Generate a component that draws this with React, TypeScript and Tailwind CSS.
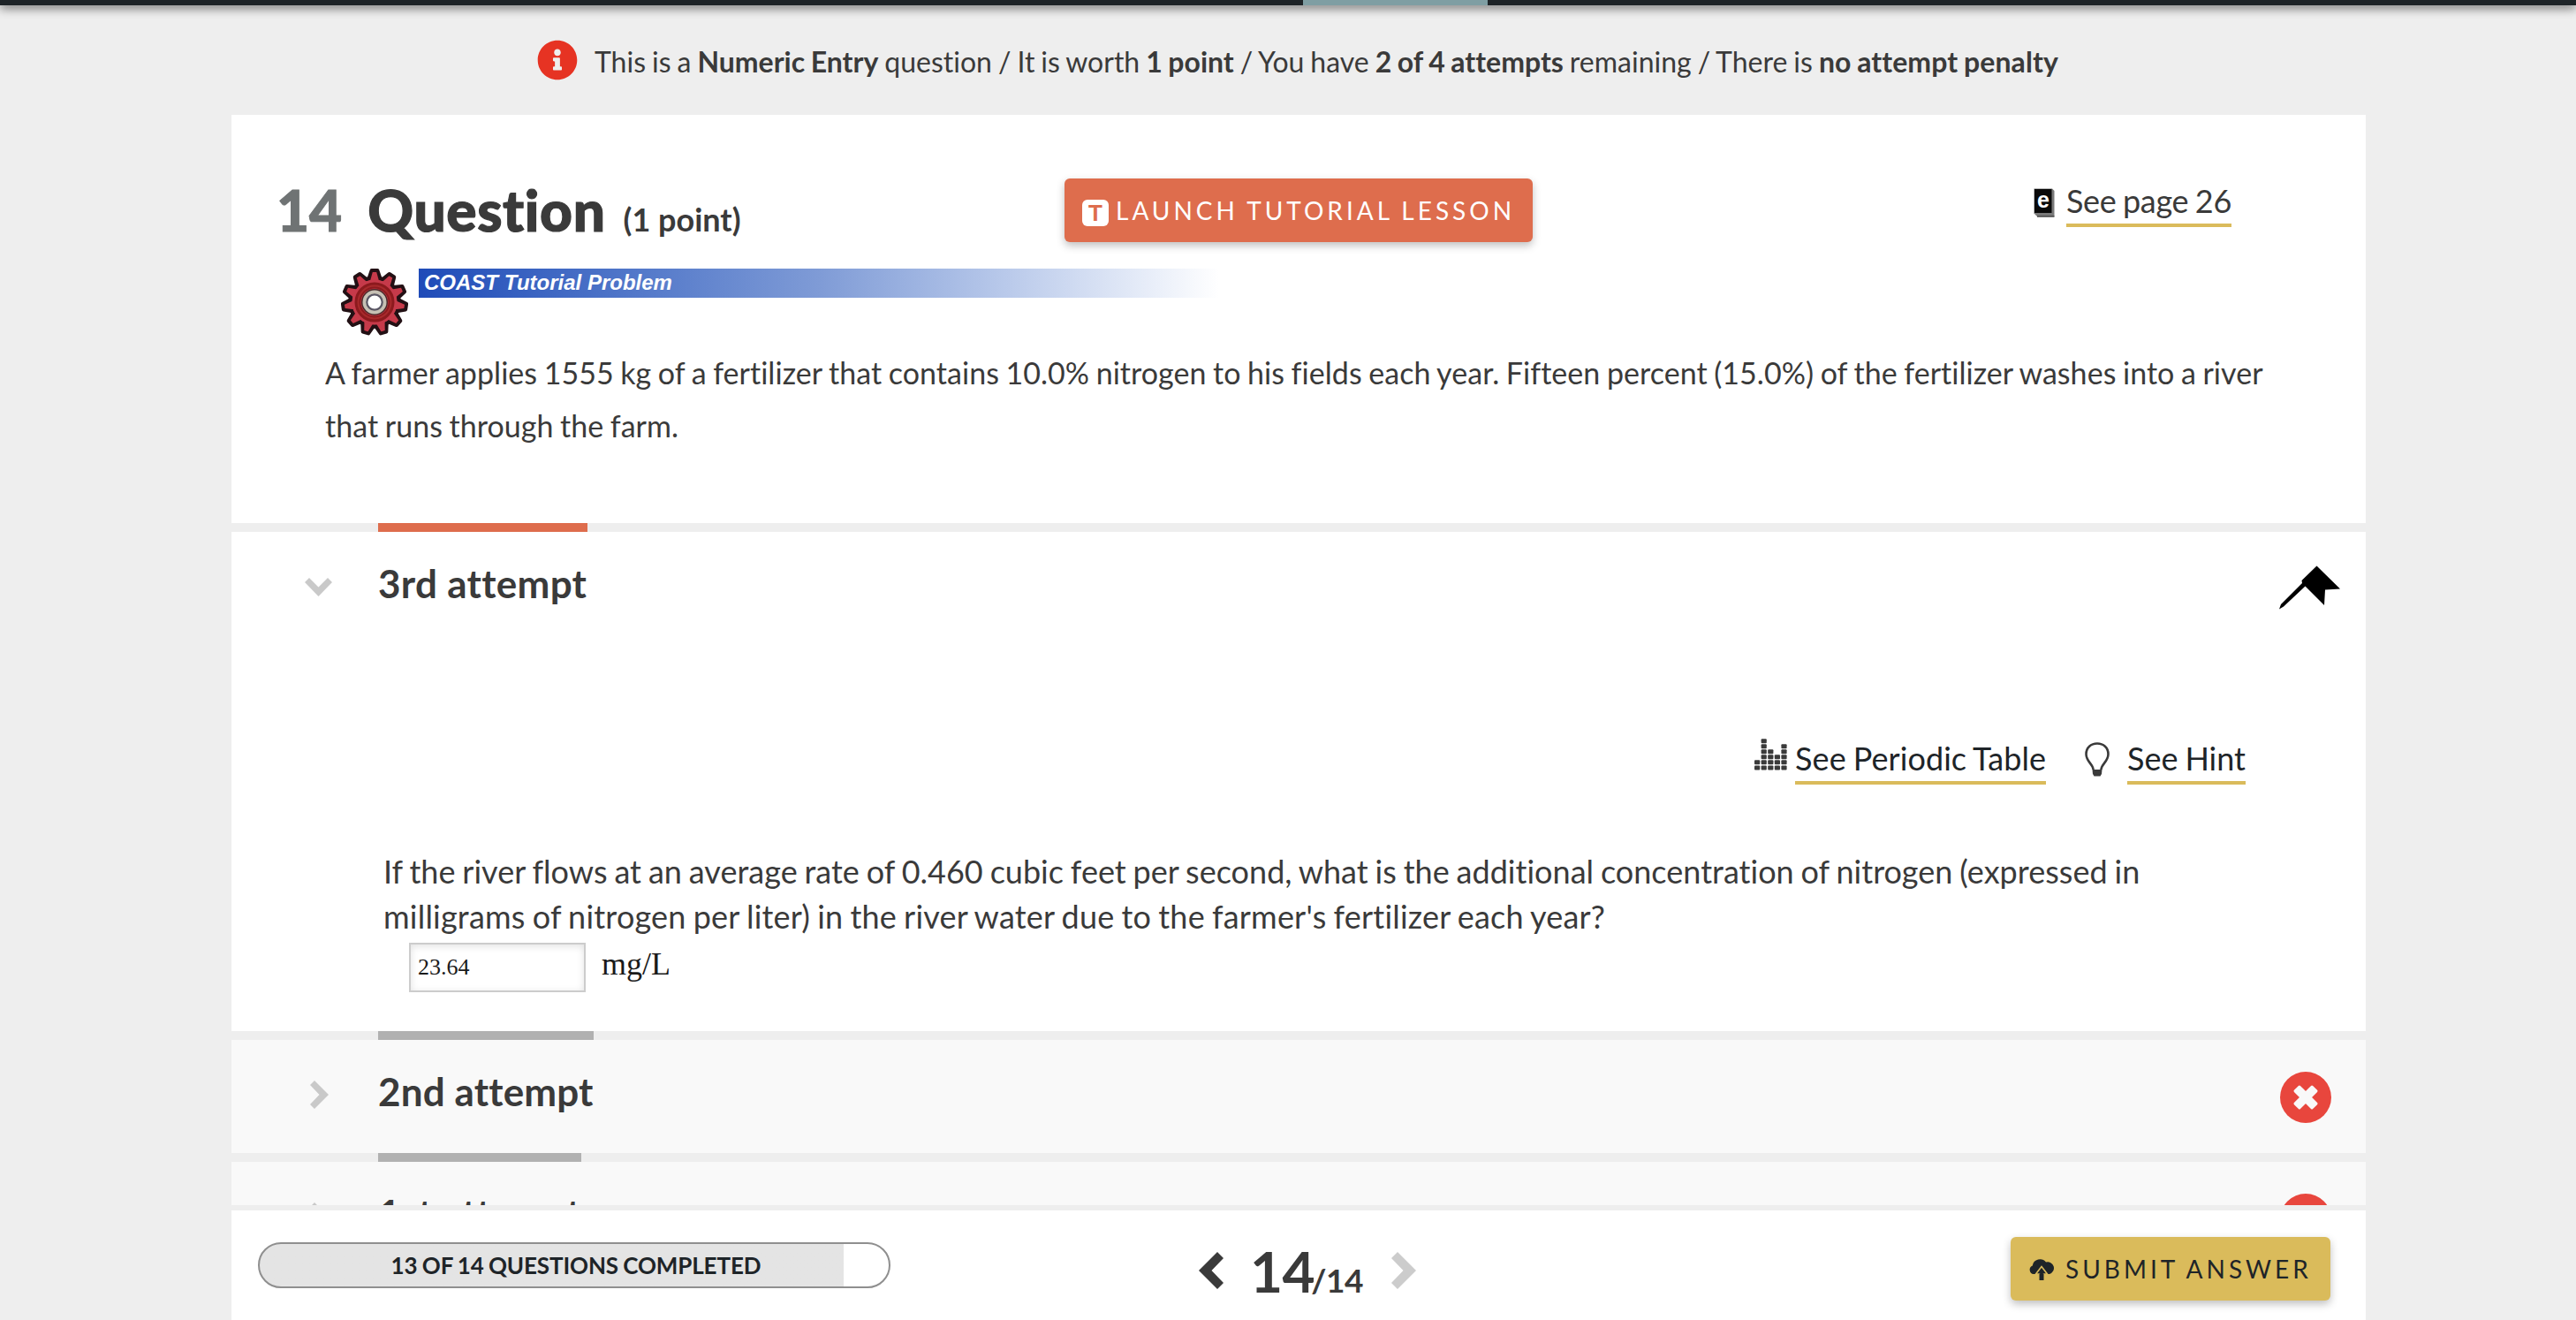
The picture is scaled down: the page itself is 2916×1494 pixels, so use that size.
import type { ReactNode } from 'react';
import { FaInfoCircle } from 'react-icons/fa';

const attempts = [
  { label: '2nd attempt', tab: 'w-[244px]' },
  { label: '1st attempt', tab: 'w-[230px]' },
];

// Column heights of the dotted bar chart icon, in dots
const periodicColumns = [2, 6, 4, 3, 5];

// 11-tooth gear, teeth placed around the centre
const gearTeeth = Array.from({ length: 11 }, (_, i) => (i * 360) / 11);

function GearIcon() {
  return (
    <svg viewBox="-38 -38 76 76" className="block w-[76px] h-[76px] shrink-0">
      <g fill="#c63a4a" stroke="#221014" strokeWidth="4.4" strokeLinejoin="round">
        {gearTeeth.map((angle) => (
          <path key={angle} d="M-6.5 -26 L-3.2 -35.8 H3.2 L6.5 -26 Z" transform={`rotate(${angle})`} />
        ))}
        <circle r="27.5" />
      </g>
      <g fill="#c63a4a">
        {gearTeeth.map((angle) => (
          <path key={angle} d="M-5 -24 L-2.2 -34 H2.2 L5 -24 Z" transform={`rotate(${angle})`} />
        ))}
        <circle r="25.5" />
      </g>
      <circle r="19" fill="none" stroke="#8c1a1e" strokeWidth="7" />
      <circle r="18.5" fill="none" stroke="#a82a2c" strokeWidth="2" />
      <circle r="15" fill="#4a2a2a" />
      <circle r="13.5" fill="#c6c0b4" />
      <circle r="9.8" fill="#5a5664" />
      <circle r="7.6" fill="#fff" />
    </svg>
  );
}

function BookIcon() {
  return (
    <svg viewBox="0 0 24 33" className="block w-[24px] h-[33px]">
      <path d="M0.5 0.5 H21 L23.5 3 V32 H4 L0.5 28.5 Z" fill="#7a7a7a" />
      <path d="M4 32 H23.5" stroke="#444" strokeWidth="1.5" />
      <path d="M1 1 H20.5 V28 H1 Z" fill="#0a0a0a" />
      <text x="10.8" y="22" textAnchor="middle" fill="#fff" className="font-['Liberation_Sans',sans-serif] font-bold text-[25px]">
        e
      </text>
    </svg>
  );
}

function PinIcon() {
  return (
    <svg viewBox="0 0 69 50" className="block w-[69px] h-[50px]">
      <path d="M42.5 0.5 L69 26.5 L52 27.5 L51 45 L29.5 23.5 L5 46.5 L0 49.5 L2 44 L26 20 L25.5 17 Z" fill="#000" />
    </svg>
  );
}

function PeriodicIcon() {
  return (
    <svg viewBox="0 0 37 36" className="block w-[37px] h-[36px]" fill="#3a3a3a">
      {periodicColumns.map((count, col) =>
        Array.from({ length: count }, (_, row) => (
          <rect key={`${col}-${row}`} x={col * 7.6} y={30.4 - row * 6.05} width="6.2" height="5" rx="1" />
        ))
      )}
    </svg>
  );
}

function BulbIcon() {
  return (
    <svg viewBox="0 0 28 39" className="block w-[28px] h-[39px]">
      <path d="M9.5 31 C9.5 25 1.5 22 1.5 13.5 C1.5 6 7 1.5 14 1.5 C21 1.5 26.5 6 26.5 13.5 C26.5 22 18.5 25 18.5 31" fill="none" stroke="#3a3a3a" strokeWidth="2.6" />
      <path d="M8.5 31 H19.5 L19 36 L17.5 38.5 H10.5 L9 36 Z" fill="#3a3a3a" />
    </svg>
  );
}

function CloudUploadIcon() {
  return (
    <svg viewBox="0 0 29 27" className="block w-[29px] h-[27px]">
      <path d="M5 19 A5 5 0 0 1 3.8 9.4 A8.6 8.6 0 0 1 19 5.6 A6.9 6.9 0 1 1 23 19 Z" fill="#1e2428" />
      <path d="M14 10.5 L20.5 19 H16.5 V26.5 H11.5 V19 H7.5 Z" fill="#1e2428" stroke="#dabb5b" strokeWidth="1.6" />
      <path d="M11.5 18.5 V26 H16.5 V18.5 Z" fill="#1e2428" />
    </svg>
  );
}

function WrongIcon() {
  return (
    <svg viewBox="-29 -29 58 58" className="block w-[58px] h-[58px]">
      <circle r="29" fill="#e8463d" />
      <g fill="#f9f9f9">
        <rect x="-15" y="-5" width="30" height="10" rx="1.5" transform="rotate(45)" />
        <rect x="-15" y="-5" width="30" height="10" rx="1.5" transform="rotate(-45)" />
      </g>
    </svg>
  );
}

function ToolLink({ children }: { children: ReactNode }) {
  return (
    <a className="block text-[36px] leading-[44px] [word-spacing:-0.038em] pb-1 border-b-4 border-[#dabb5b] whitespace-nowrap">
      {children}
    </a>
  );
}

function ClosedAttempt({ label, tab }: { label: string; tab: string }) {
  return (
    <section className="shrink-0">
      <div className="h-[10px] pl-[166px]">
        <div className={`h-full bg-[#b1b1b1] ${tab}`} />
      </div>
      <div className="h-[128px] bg-[#f9f9f9] flex items-start pl-[89px] pr-[39px]">
        <svg viewBox="0 0 21 32" className="block w-[21px] h-[32px] mt-[46px]">
          <path d="M0 5 L5 0 L21 16 L5 32 L0 27 L10.5 16 Z" fill="#c9c9c9" />
        </svg>
        <h3 className="ml-[56px] text-[44px] leading-[116px] font-bold tracking-[0.15px]">{label}</h3>
        <div className="ml-auto mt-[36px]">
          <WrongIcon />
        </div>
      </div>
    </section>
  );
}

export default function App() {
  return (
    <div className="w-[2916px] h-[1494px] overflow-hidden bg-[#eeeeee] text-[#3a3a3a] font-['Lato',sans-serif] [font-variant-ligatures:no-common-ligatures] flex flex-col">
      {/* Bottom edge of the top navigation */}
      <div className="h-[6px] shrink-0 bg-[#1e2428] pl-[1475px] shadow-[0_2px_12px_rgba(0,0,0,0.8)]">
        <div className="w-[209px] h-full bg-[#7f9ea3]" />
      </div>

      {/* Question info */}
      <div className="h-[124px] shrink-0 flex items-center pl-[608px]">
        <FaInfoCircle className="w-[46px] h-[46px] text-[#e63323]" />
        <p className="ml-[19px] mt-[3px] text-[32px] leading-[40px] [word-spacing:-0.038em] whitespace-nowrap">
          This is a <b>Numeric Entry</b> question / It is worth <b>1 point</b> / You have <b>2 of 4 attempts</b> remaining / There is <b className="tracking-[0.1px]">no attempt penalty</b>
        </p>
      </div>

      <main className="w-[2416px] ml-[262px] flex-1 min-h-0 flex flex-col">
        <div className="flex-1 min-h-0 overflow-hidden flex flex-col">
          {/* Question statement */}
          <section className="h-[462px] shrink-0 bg-white pt-[72px]">
            <div className="grid grid-cols-[1fr_auto_1fr] h-[72px]">
              <h1 className="flex items-baseline pl-[51px] text-[64px] leading-[72px] font-black whitespace-nowrap">
                <span className="text-[#6f7374] [-webkit-text-stroke:1px_#6f7374]">14</span>
                <span className="ml-[29px] tracking-[0.6px] [-webkit-text-stroke:1.2px_#3a3a3a]">Question</span>
                <span className="ml-[20px] text-[36px] font-bold">(1 point)</span>
              </h1>
              <button className="w-[530px] h-[72px] rounded-md bg-[#de6d4d] shadow-[0_4px_10px_rgba(0,0,0,0.25)] text-white flex items-center pl-[20px]">
                <svg viewBox="0 0 30 30" className="block w-[30px] h-[30px] mt-[6px]">
                  <rect width="30" height="30" rx="6" fill="#fff" />
                  <text x="15" y="24" textAnchor="middle" fill="#de6d4d" className="font-['Liberation_Sans',sans-serif] font-bold text-[26px]">
                    T
                  </text>
                </svg>
                <span className="ml-[8px] text-[28px] tracking-[4px] [word-spacing:-0.038em] whitespace-nowrap">LAUNCH TUTORIAL LESSON</span>
              </button>
              <div className="flex items-start justify-end pr-[152px] pt-[3px] tracking-[-0.3px]">
                <div className="mt-[8px] mr-[13px]">
                  <BookIcon />
                </div>
                <ToolLink>See page 26</ToolLink>
              </div>
            </div>

            <div className="flex items-start pl-[124px] mt-[30px] h-[76px]">
              <GearIcon />
              <div className="ml-[12px] w-[906px] h-[33px] pl-[6px] bg-linear-to-r from-[#1f4bb8] via-[#7f9bd6] to-white font-['Liberation_Sans',sans-serif] italic font-bold text-[24px] leading-[32px] text-white">
                COAST Tutorial Problem
              </div>
            </div>

            <p className="mt-[12px] pl-[106px] text-[34px] leading-[60px] tracking-[0.04px] [word-spacing:-0.035em] whitespace-nowrap">
              A farmer applies 1555 kg of a fertilizer that contains 10.0% nitrogen to his fields each year. Fifteen percent (15.0%) of the fertilizer washes into a river
              <br />
              that runs through the farm.
            </p>
          </section>

          {/* Open attempt */}
          <section className="shrink-0">
            <div className="h-[10px] pl-[166px]">
              <div className="w-[237px] h-full bg-[#de6d4d]" />
            </div>
            <div className="h-[565px] bg-white">
              <div className="flex items-start h-[116px] pl-[83px] pr-[29px]">
                <svg viewBox="0 0 31 21" className="block w-[31px] h-[21px] mt-[52px]">
                  <path d="M0 5 L5 0 L15.5 10.5 L26 0 L31 5 L15.5 21 Z" fill="#c9c9c9" />
                </svg>
                <h3 className="ml-[52px] text-[44px] leading-[116px] font-bold tracking-[0.3px]">3rd attempt</h3>
                <div className="ml-auto mt-[38px]">
                  <PinIcon />
                </div>
              </div>

              <div className="mt-[118px] flex justify-end items-start pr-[136px] text-[#1e2428]">
                <div className="mr-[9px]">
                  <PeriodicIcon />
                </div>
                <div className="tracking-[0.08px]">
                  <ToolLink>See Periodic Table</ToolLink>
                </div>
                <div className="ml-[44px] mr-[20px] mt-[4px]">
                  <BulbIcon />
                </div>
                <ToolLink>See Hint</ToolLink>
              </div>

              <div className="mt-[73px] pl-[172px]">
                <p className="text-[36px] leading-[51px] tracking-[0.02px] [word-spacing:-0.038em] whitespace-nowrap">
                  If the river flows at an average rate of 0.460 cubic feet per second, what is the additional concentration of nitrogen (expressed in
                  <br />
                  <span className="tracking-[0.21px]">
                    milligrams of nitrogen per liter) in the river water due to the farmer's fertilizer each year?
                  </span>
                </p>
                <div className="mt-[4px] pl-[29px] flex items-start font-['Liberation_Serif',serif] text-[#1a1a1a]">
                  <input
                    defaultValue="23.64"
                    className="block w-[200px] h-[56px] border-2 border-[#cccccc] bg-white px-2 text-[26px] shadow-[inset_0_2px_8px_rgba(0,0,0,0.12)]"
                  />
                  <span className="ml-[18px] text-[36px] leading-[48px]">mg/L</span>
                </div>
              </div>
            </div>
          </section>

          {attempts.map((attempt) => (
            <ClosedAttempt key={attempt.label} label={attempt.label} tab={attempt.tab} />
          ))}
        </div>

        {/* Footer */}
        <footer className="h-[130px] shrink-0 border-t-[6px] border-[#eeeeee] bg-white flex items-start">
          <div className="ml-[30px] mt-[36px] w-[716px] h-[52px] pl-[4px] rounded-full border-2 border-[#8f8f8f] overflow-hidden bg-linear-to-r from-[#e4e4e4] from-[661px] to-white to-[661px] text-center text-[26px] leading-[48px] tracking-[-0.12px] [word-spacing:-0.038em] font-bold text-[#1e2428]">
            13 OF 14 QUESTIONS COMPLETED
          </div>
          <div className="ml-[349px] flex items-start">
            <svg viewBox="0 0 28 42" className="block w-[28px] h-[42px] mt-[47px]">
              <path d="M28 7 L21 0 L0 21 L21 42 L28 35 L14.5 21 Z" fill="#3a3a3a" />
            </svg>
            <div className="mt-[29px] pl-[30px] w-[190px] text-[64px] leading-[80px] tracking-[-0.5px] font-bold whitespace-nowrap">
              14<span className="-ml-[4px] text-[37px]">/14</span>
            </div>
            <svg viewBox="0 0 28 42" className="block w-[28px] h-[42px] mt-[47px]">
              <path d="M0 7 L7 0 L28 21 L7 42 L0 35 L13.5 21 Z" fill="#cccccc" />
            </svg>
          </div>
          <button className="ml-auto mr-[40px] mt-[30px] w-[362px] h-[72px] rounded-md bg-[#dabb5b] shadow-[0_4px_10px_rgba(0,0,0,0.25)] text-[#1e2428] flex items-center pl-[21px]">
            <CloudUploadIcon />
            <span className="ml-[12px] text-[28px] tracking-[4px] [word-spacing:-0.038em] whitespace-nowrap">SUBMIT ANSWER</span>
          </button>
        </footer>
      </main>
    </div>
  );
}
